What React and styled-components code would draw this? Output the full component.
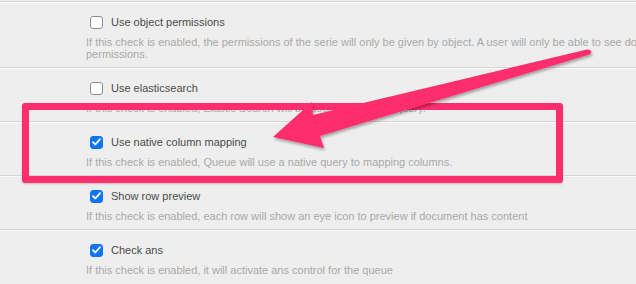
import React from "react";
import styled, { createGlobalStyle } from "styled-components";

const Global = createGlobalStyle`
  html, body { margin: 0; padding: 0; overflow: hidden; background: #eeeeee; }
  body { font-family: "Liberation Sans", Arial, sans-serif; }
`;

const Page = styled.div`
  position: relative;
  width: 780px;
  height: 284px;
  padding-top: 1px;
  box-sizing: border-box;
  background: #eeeeee;
`;

const Row = styled.div`
  border-top: 1px solid #d6d6d6;
  box-shadow: inset 0 1px 0 #fafafa;
  padding: 10px 0 7px 86px;
`;

const LabelLine = styled.label`
  display: flex;
  align-items: center;
  height: 20px;
  padding-left: 4px;
  gap: 8px;
  font-size: 11px;
  color: #4b4b4b;
`;

const Box = styled.span`
  display: inline-flex;
  align-items: center;
  justify-content: center;
  width: 13px;
  height: 13px;
  box-sizing: border-box;
  border-radius: 3px;
  background: ${(p) => (p.$checked ? "#0f74f5" : "#ffffff")};
  border: 1px solid ${(p) => (p.$checked ? "#0f74f5" : "#8c8c8c")};
  flex: none;
`;

const Description = styled.div`
  margin-top: 4px;
  font-size: 11px;
  line-height: 12px;
  color: #a9a9a9;
  padding-right: 10px;
`;

const Highlight = styled.div`
  position: absolute;
  left: 22px;
  top: 103px;
  width: 541px;
  height: 80px;
  box-sizing: border-box;
  border: 7px solid #fe2d6d;
  border-radius: 3px;
  box-shadow: 0 1px 2px rgba(0, 0, 0, 0.2);
`;

const Overlay = styled.svg`
  position: absolute;
  left: 0;
  top: 0;
  width: 636px;
  height: 284px;
  pointer-events: none;
`;

function Checkbox({ checked }) {
  return (
    <Box $checked={checked}>
      {checked && (
        <svg width="9" height="8" viewBox="0 0 9 8">
          <path d="M1 4.2 L3.4 6.5 L8 1.2" fill="none" stroke="#fff" strokeWidth="1.8" strokeLinecap="round" strokeLinejoin="round" />
        </svg>
      )}
    </Box>
  );
}

const settings = [
  {
    label: "Use object permissions",
    checked: false,
    desc: "If this check is enabled, the permissions of the serie will only be given by object. A user will only be able to see documents with the right permissions.",
  },
  {
    label: "Use elasticsearch",
    checked: false,
    desc: "If this check is enabled, Elastic Search will be used for the data query.",
  },
  {
    label: "Use native column mapping",
    checked: true,
    desc: "If this check is enabled, Queue will use a native query to mapping columns.",
  },
  {
    label: "Show row preview",
    checked: true,
    desc: "If this check is enabled, each row will show an eye icon to preview if document has content",
  },
  {
    label: "Check ans",
    checked: true,
    desc: "If this check is enabled, it will activate ans control for the queue",
  },
];

export default function App() {
  return (
    <Page>
      <Global />
      {settings.map((s) => (
        <Row key={s.label}>
          <LabelLine>
            <Checkbox checked={s.checked} />
            {s.label}
          </LabelLine>
          <Description>{s.desc}</Description>
        </Row>
      ))}
      <Highlight />
      <Overlay viewBox="0 0 636 284">
        <defs>
          <filter id="sh" x="-10%" y="-20%" width="120%" height="160%">
            <feDropShadow dx="1" dy="2" stdDeviation="1.4" floodColor="#000" floodOpacity="0.35" />
          </filter>
        </defs>
        <polygon
          filter="url(#sh)"
          fill="#fe2d6d"
          points="273,137 312,102 313,115 587,49.5 590,50 591.5,52 589.5,54.5 320,136 324,148"
        />
      </Overlay>
    </Page>
  );
}
